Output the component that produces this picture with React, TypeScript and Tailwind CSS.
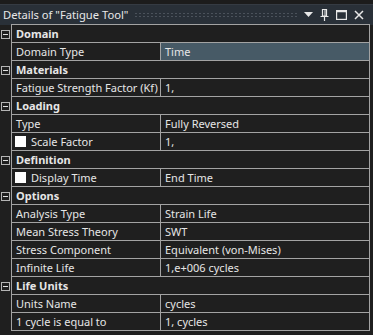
import React from 'react';

type Row =
  | { kind: 'head'; label: string }
  | { kind: 'prop'; label: string; value: string; check?: boolean; selected?: boolean };

const rows: Row[] = [
  { kind: 'head', label: 'Domain' },
  { kind: 'prop', label: 'Domain Type', value: 'Time', selected: true },
  { kind: 'head', label: 'Materials' },
  { kind: 'prop', label: 'Fatigue Strength Factor (Kf)', value: '1,' },
  { kind: 'head', label: 'Loading' },
  { kind: 'prop', label: 'Type', value: 'Fully Reversed' },
  { kind: 'prop', label: 'Scale Factor', value: '1,', check: true },
  { kind: 'head', label: 'Definition' },
  { kind: 'prop', label: 'Display Time', value: 'End Time', check: true },
  { kind: 'head', label: 'Options' },
  { kind: 'prop', label: 'Analysis Type', value: 'Strain Life' },
  { kind: 'prop', label: 'Mean Stress Theory', value: 'SWT' },
  { kind: 'prop', label: 'Stress Component', value: 'Equivalent (von-Mises)' },
  { kind: 'prop', label: 'Infinite Life', value: '1,e+006 cycles' },
  { kind: 'head', label: 'Life Units' },
  { kind: 'prop', label: 'Units Name', value: 'cycles' },
  { kind: 'prop', label: '1 cycle is equal to', value: '1, cycles' },
];

function MinusBox() {
  return (
    <div className="w-[9px] h-[9px] border border-[#b4b4b4] flex items-center justify-center">
      <div className="w-[5px] h-px bg-[#e0e0e0]" />
    </div>
  );
}

function TitleBar() {
  return (
    <div className="h-[25px] bg-[#1c1c1c] pt-[4px]">
      <div className="h-[21px] border-t border-[#353b43] bg-[#293038] flex items-center pl-[3px] pr-[9px]">
        <span className="text-[11.2px] text-[#e8e8e8] whitespace-nowrap">Details of "Fatigue Tool"</span>
        <div className="flex-1 ml-[6px] mr-[5px] h-[6px] bg-[radial-gradient(circle,#4b525b_0.8px,transparent_1px)] bg-[length:4px_3px]" />
        <div className="flex items-center gap-[7px]">
          <svg width="9" height="6" viewBox="0 0 9 6">
            <path d="M0 0 H9 L4.5 5 Z" fill="#e8e8e8" />
          </svg>
          <svg width="9" height="12" viewBox="0 0 9 12">
            <path d="M2.5 0.5 H6.5 V7 H2.5 Z M0.5 7.5 H8.5 M4.5 8 V12" stroke="#e8e8e8" strokeWidth="1.2" fill="none" />
            <path d="M5 1 V7" stroke="#e8e8e8" strokeWidth="1" />
          </svg>
          <svg width="11" height="10" viewBox="0 0 11 10">
            <rect x="0.6" y="0.6" width="9.8" height="8.8" stroke="#e8e8e8" strokeWidth="1.2" fill="none" />
            <path d="M0.5 1.5 H10.5" stroke="#e8e8e8" strokeWidth="1.5" />
          </svg>
          <svg width="10" height="10" viewBox="0 0 10 10">
            <path d="M1 1 L9 9 M9 1 L1 9" stroke="#e8e8e8" strokeWidth="1.5" />
          </svg>
        </div>
      </div>
    </div>
  );
}

export default function App() {
  return (
    <div
      className="w-[373px] h-[335px] bg-[#1f1f1f] overflow-hidden text-[#e6e6e6] text-[11px]"
      style={{ fontFamily: '"Noto Sans", "Open Sans", sans-serif' }}
    >
      <TitleBar />
      <div className="flex flex-col">
        {rows.map((row, i) => (
          <div key={i} className="flex h-[18px]">
            <div className="w-[11px] flex items-center pl-[1px]">
              {row.kind === 'head' && <MinusBox />}
            </div>
            <div
              className={`w-[359px] flex border-l border-r border-b border-[#a3a3a3] ${i === 0 ? 'border-t h-[19px] -mt-px' : ''}`}
            >
              {row.kind === 'head' ? (
                <div className="flex-1 flex items-center pl-[4px] font-bold leading-none">{row.label}</div>
              ) : (
                <>
                  <div className="w-[149px] border-r border-[#a3a3a3] flex items-center pl-[4px] gap-[5px] leading-none whitespace-nowrap">
                    {row.check && <div className="w-[11px] h-[11px] bg-white -ml-px" />}
                    {row.label}
                  </div>
                  <div
                    className={`flex-1 flex items-center pl-[4px] leading-none whitespace-nowrap ${row.selected ? 'bg-[#475a66]' : ''}`}
                  >
                    {row.value}
                  </div>
                </>
              )}
            </div>
          </div>
        ))}
      </div>
    </div>
  );
}
